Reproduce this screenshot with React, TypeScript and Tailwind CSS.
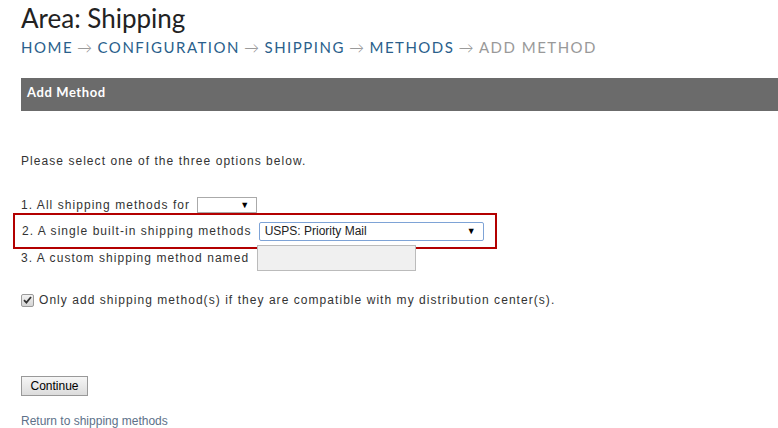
import { useState } from 'react'

const crumbs = ['Home', 'Configuration', 'Shipping', 'Methods']

function Caret() {
  return <span className="text-[9px] leading-none text-black">▼</span>
}

export default function App() {
  const [onlyCompatible, setOnlyCompatible] = useState(true)

  return (
    <div className="min-h-[428px] bg-white pl-[21px] font-['Liberation_Sans',Arial,sans-serif] text-[#333]">
      {/* Page heading */}
      <h1 className="pt-[3px] font-['Lato',sans-serif] text-[26px] leading-[30px] text-[#222]">Area: Shipping</h1>
      <nav className="mt-[5px] flex items-center font-['Lato',sans-serif] text-[15px] uppercase leading-[18px] tracking-[1.5px]">
        {crumbs.map(c => (
          <span key={c} className="flex items-center">
            <a href="#" className="text-[#2a5f8c]">{c}</a>
            <span className="mx-[4px] font-light text-[#888]">→</span>
          </span>
        ))}
        <span className="text-[#999]">Add Method</span>
      </nav>

      {/* Section bar */}
      <div className="mt-[22px] flex h-[33px] items-center bg-[#6b6b6b] pb-[3px] pl-[6px] font-['Lato',sans-serif] text-[13px] font-bold tracking-[0.6px] text-white">
        Add Method
      </div>

      <form className="text-[12px] tracking-[1.05px]">
        <p className="mt-[43px] leading-[15px]">Please select one of the three options below.</p>

        <div className="mt-[28px] flex h-[16px] items-center">
          <span>1. All shipping methods for</span>
          <div className="ml-[7px] flex h-[16px] w-[60px] items-center justify-end border border-[#aaa] bg-white pr-[6px]">
            <Caret />
          </div>
        </div>

        <div className="-ml-[8px] flex h-[36px] w-[484px] items-center border-2 border-[#b30000] pl-[7px]">
          <span>2. A single built-in shipping methods</span>
          <div className="ml-[7px] flex h-[19px] w-[225px] items-center justify-between rounded-[2px] border border-[#7ea3d6] bg-white pl-[5px] pr-[7px] tracking-normal text-[#222]">
            <span>USPS: Priority Mail</span>
            <Caret />
          </div>
        </div>

        <div className="-mt-[4px] flex items-center">
          <span>3. A custom shipping method named</span>
          <input className="ml-[8px] h-[26px] w-[159px] border border-[#bbb] bg-[#f0f0f0]" />
        </div>

        <label className="mt-[20px] flex items-center">
          <button
            type="button"
            role="checkbox"
            aria-checked={onlyCompatible}
            onClick={() => setOnlyCompatible(v => !v)}
            className="flex h-[13px] w-[13px] items-center justify-center rounded-[2px] border border-[#9a9a9a] bg-gradient-to-b from-[#f2f2f2] to-[#d4d4d4]"
          >
            {onlyCompatible && (
              <svg width="9" height="8" viewBox="0 0 9 8">
                <path d="M1 4.2 L3.4 6.6 L8 1" fill="none" stroke="#333" strokeWidth="1.8" />
              </svg>
            )}
          </button>
          <span className="ml-[5px]">Only add shipping method(s) if they are compatible with my distribution center(s).</span>
        </label>

        <button
          type="button"
          className="mt-[67px] block h-[20px] w-[67px] border border-[#999] bg-gradient-to-b from-[#f6f6f6] to-[#dcdcdc] text-[12px] tracking-normal text-black"
        >
          Continue
        </button>

        <a href="#" className="mt-[16px] block text-[12px] tracking-normal text-[#5d7189]">Return to shipping methods</a>
      </form>
    </div>
  )
}
